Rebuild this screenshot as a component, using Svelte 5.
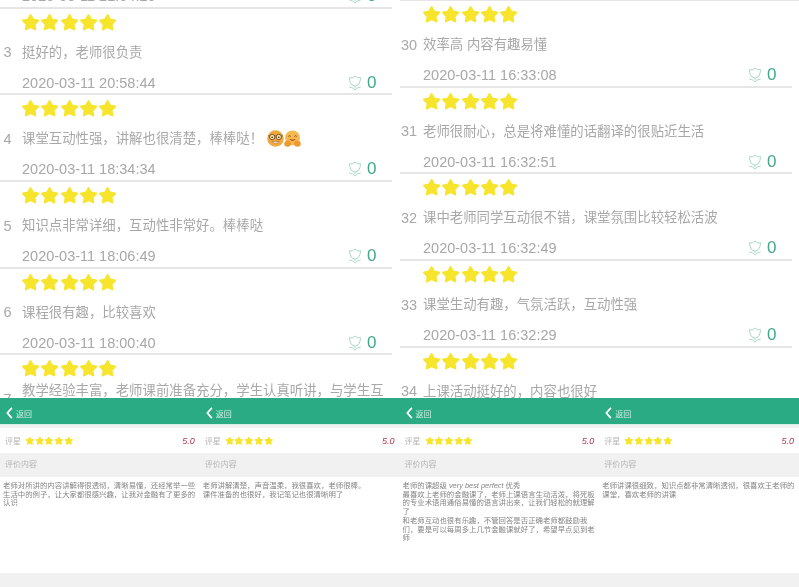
<script>
  const left = [
    { n: 2, text: '老师讲得很好', date: '2020-03-11 21:04:20' },
    { n: 3, text: '挺好的，老师很负责', date: '2020-03-11 20:58:44' },
    { n: 4, text: '课堂互动性强，讲解也很清楚，棒棒哒！', date: '2020-03-11 18:34:34', emoji: true },
    { n: 5, text: '知识点非常详细，互动性非常好。棒棒哒', date: '2020-03-11 18:06:49' },
    { n: 6, text: '课程很有趣，比较喜欢', date: '2020-03-11 18:00:40' },
    { n: 7, text: '教学经验丰富，老师课前准备充分，学生认真听讲，与学生互动很好', date: '2020-03-11 17:58:12' }
  ];
  const right = [
    { n: 30, text: '效率高 内容有趣易懂', date: '2020-03-11 16:33:08' },
    { n: 31, text: '老师很耐心，总是将难懂的话翻译的很贴近生活', date: '2020-03-11 16:32:51' },
    { n: 32, text: '课中老师同学互动很不错，课堂氛围比较轻松活波', date: '2020-03-11 16:32:49' },
    { n: 33, text: '课堂生动有趣，气氛活跃，互动性强', date: '2020-03-11 16:32:29' },
    { n: 34, text: '上课活动挺好的，内容也很好', date: '2020-03-11 16:32:10' }
  ];
  const details = [
    { lines: ['老师对所讲的内容讲解得很透彻，清晰易懂，还经常举一些生活中的例子，让大家都很感兴趣，让我对金融有了更多的认识'] },
    { lines: ['老师讲解清楚，声音温柔，我很喜欢，老师很棒。', '课件准备的也很好，我记笔记也很清晰明了'] },
    { lines: ['老师的课超级 <i>very best perfect</i> 优秀', '最喜欢上老师的金融课了，老师上课语言生动活泼，将死板的专业术语用通俗易懂的语言讲出来，让我们轻松的就理解了', '和老师互动也很有乐趣，不管回答是否正确老师都鼓励我们，要是可以每周多上几节金融课就好了，希望早点见到老师'] },
    { lines: ['老师讲课很细致，知识点都非常清晰透彻，很喜欢王老师的课堂，喜欢老师的讲课'] }
  ];
  const starPoints = '12,2.5 15.1,8.2 21.5,9.4 17,14.1 17.9,20.6 12,17.8 6.1,20.6 7,14.1 2.5,9.4 8.9,8.2';
</script>

{#snippet stars(cls)}
  <div class={cls}>
    {#each [1, 2, 3, 4, 5] as s (s)}
      <svg viewBox="0 0 24 24"><polygon points={starPoints} /></svg>
    {/each}
  </div>
{/snippet}

{#snippet column(rows, cls)}
  <div class="col {cls}">
    {#each rows as row (row.n)}
      <div class="row">
        {@render stars('row-stars')}
        <div class="row-body">
          <span class="num">{row.n}</span>
          <p class="comment">
            {row.text}
            {#if row.emoji}
              <svg class="emoji" viewBox="0 0 16 16">
                <circle cx="8" cy="8" r="7.8" fill="#eda93f" />
                <path d="M1 5.6 H15" stroke="#7a4e22" stroke-width=".8" />
                <circle cx="4.9" cy="6.6" r="2.5" fill="#f8e3b0" stroke="#7a4e22" stroke-width=".9" />
                <circle cx="11.1" cy="6.6" r="2.5" fill="#f8e3b0" stroke="#7a4e22" stroke-width=".9" />
                <circle cx="4.9" cy="6.8" r=".8" fill="#5a3a18" />
                <circle cx="11.1" cy="6.8" r=".8" fill="#5a3a18" />
                <path d="M4.5 10.6 Q8 11.6 11.5 10.6 Q8 14.6 4.5 10.6Z" fill="#fff" stroke="#a0602a" stroke-width=".5" />
              </svg>
              <svg class="emoji" viewBox="0 0 16 16">
                <circle cx="8" cy="7.4" r="7" fill="#f6b94e" />
                <path d="M4 6 Q5 4.8 6.2 6 M9.8 6 Q11 4.8 12 6" fill="none" stroke="#7a4a20" stroke-width=".9" />
                <path d="M4.8 8.2 Q8 9.6 11.2 8.2 Q8 12.4 4.8 8.2Z" fill="#b5522c" />
                <ellipse cx="3.4" cy="13" rx="3.2" ry="2.8" fill="#ee9a34" />
                <ellipse cx="12.6" cy="13" rx="3.2" ry="2.8" fill="#ee9a34" />
              </svg>
            {/if}
          </p>
        </div>
        <div class="row-foot">
          <span class="date">{row.date}</span>
          <svg class="like" viewBox="0 0 16 18" fill="none" stroke="#9fd2c2" stroke-width="1">
            <path d="M8 1 L10.8 3 L14.4 3 L13.6 7.6 Q12.8 11.8 8 12.6 Q3.2 11.8 2.4 7.6 L1.6 3 L5.2 3 Z" />
            <path d="M8 12.6 V15" />
            <path d="M1.5 13.6 Q5.5 13.8 8 17 Q10.5 13.8 14.5 13.6" />
          </svg>
          <span class="count">0</span>
        </div>
      </div>
    {/each}
  </div>
{/snippet}

<div class="page">
  <div class="lists">
    {@render column(left, 'col-left')}
    {@render column(right, 'col-right')}
  </div>
  <div class="details">
    {#each details as d}
      <div class="detail">
        <div class="bar">
          <svg class="back" viewBox="0 0 8 14" fill="none" stroke="#fff" stroke-width="2"><path d="M6.8 1 L1.5 7 L6.8 13" /></svg>
          <span>返回</span>
        </div>
        <div class="rating">
          <span class="label">评星</span>
          {@render stars('small-stars')}
          <span class="score">5.0</span>
        </div>
        <div class="heading">评价内容</div>
        <div class="content">
          {#each d.lines as line}
            <p>{@html line}</p>
          {/each}
        </div>
      </div>
    {/each}
  </div>
  <div class="bottom"></div>
</div>

<style>
  :global(body) {
    margin: 0;
    background: #fff;
  }
  .page {
    width: 799px;
    height: 587px;
    overflow: hidden;
    display: flex;
    flex-direction: column;
    font-family: "Liberation Sans", "Noto Sans CJK SC", sans-serif;
    filter: blur(0.35px);
  }
  .lists {
    height: 398px;
    flex: none;
    overflow: hidden;
    display: grid;
    grid-template-columns: 400px 399px;
  }
  .col-left {
    margin-top: -78px;
  }
  .col-right {
    border-top: 1.5px solid #e6e6e6;
  }
  .col-right .row {
    padding-left: 1px;
  }
  .row {
    min-height: 86.7px;
    width: 392px;
    box-sizing: border-box;
    border-bottom: 2px solid #e6e6e6;
    display: flex;
    flex-direction: column;
  }
  .row-stars {
    height: 26px;
    padding: 4px 0 0 21px;
    box-sizing: border-box;
    display: flex;
    gap: 0.1px;
  }
  .row-stars svg {
    width: 19.2px;
    height: 19.2px;
    flex: none;
  }
  polygon {
    fill: #f6e52c;
    stroke: #f6e52c;
    stroke-width: 2.4;
    stroke-linejoin: round;
  }
  .row-body {
    min-height: 35px;
    display: flex;
    align-items: center;
    gap: 7px;
    color: #a8a8a8;
  }
  .num {
    width: 15px;
    flex: none;
    text-align: center;
    font-size: 14.5px;
  }
  .comment {
    margin: 0;
    width: 368px;
    font-size: 13.4px;
    line-height: 17px;
  }
  .emoji {
    width: 17px;
    height: 17px;
    vertical-align: -4px;
  }
  .row-foot {
    padding: 3px 8px 0 22px;
    height: 23px;
    box-sizing: border-box;
    display: flex;
    align-items: center;
    color: #a8a8a8;
  }
  .date {
    font-size: 14.5px;
    flex: 1;
  }
  .like {
    width: 14px;
    height: 16px;
    margin-right: 5px;
    flex: none;
  }
  .count {
    font-size: 17px;
    color: #3fa88c;
    width: 17px;
  }
  .details {
    height: 175px;
    flex: none;
    display: grid;
    grid-template-columns: repeat(4, 1fr);
  }
  .detail {
    display: flex;
    flex-direction: column;
    min-width: 0;
  }
  .bar {
    height: 22px;
    flex: none;
    background: #2aab83;
    color: #d4efe6;
    font-size: 8px;
    display: flex;
    align-items: center;
    gap: 3px;
    padding: 4px 0 0 6px;
    border-bottom: 1px solid #d3efe6;
  }
  .back {
    width: 7px;
    height: 12px;
  }
  .rating {
    margin-top: 3px;
    height: 25px;
    flex: none;
    display: flex;
    align-items: center;
    padding: 0 5px;
    color: #b4b4b4;
    font-size: 8px;
    box-shadow: 0 -3px 0 #f1f1f1;
  }
  .label {
    margin-right: 4px;
  }
  .small-stars {
    display: flex;
    flex: 1;
  }
  .small-stars svg {
    width: 9.7px;
    height: 9.7px;
    flex: none;
  }
  .score {
    color: #b5354c;
    font-style: italic;
    font-size: 9px;
  }
  .heading {
    height: 24px;
    flex: none;
    background: #f1f1f1;
    color: #b4b4b4;
    font-size: 8px;
    line-height: 24px;
    padding-left: 5px;
  }
  .content {
    padding: 5px 3px 0 3px;
    color: #858585;
    font-size: 7.4px;
    line-height: 8.7px;
  }
  .content p {
    margin: 0;
  }
  .bottom {
    flex: 1;
    background: #f1f1f1;
  }
</style>
